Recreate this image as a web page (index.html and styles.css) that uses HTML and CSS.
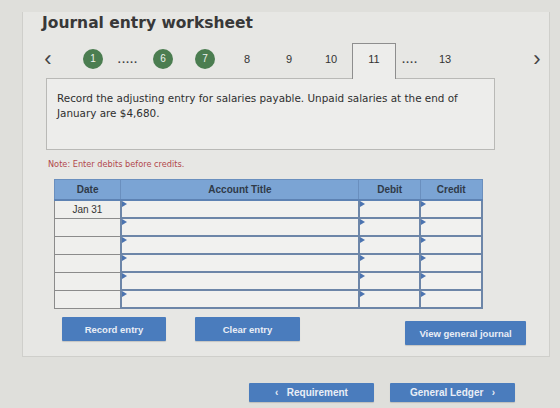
FILE: index.html
```html
<!DOCTYPE html>
<html lang="en">
<head>
    <meta charset="UTF-8">
    <title>Journal entry worksheet</title>
    <link rel="stylesheet" href="styles.css">
</head>
<body>
    <div class="panel">
        <h1 class="title">Journal entry worksheet</h1>

        <div class="steps">
            <span class="step arrow prev">&lsaquo;</span>
            <span class="step"><span class="dot">1</span></span>
            <span class="step more">.....</span>
            <span class="step"><span class="dot">6</span></span>
            <span class="step"><span class="dot">7</span></span>
            <span class="step">8</span>
            <span class="step">9</span>
            <span class="step">10</span>
            <span class="step current">11</span>
            <span class="step more">....</span>
            <span class="step">13</span>
            <span class="step arrow next">&rsaquo;</span>
        </div>

        <div class="question">
            Record the adjusting entry for salaries payable. Unpaid salaries at the end of
            January are $4,680.
        </div>

        <p class="note">Note: Enter debits before credits.</p>

        <table class="journal">
            <thead>
                <tr>
                    <th class="col-date">Date</th>
                    <th class="col-account">Account Title</th>
                    <th class="col-money">Debit</th>
                    <th class="col-money">Credit</th>
                </tr>
            </thead>
            <tbody>
                <tr><td class="date">Jan 31</td><td class="field"></td><td class="field"></td><td class="field"></td></tr>
                <tr><td class="date"></td><td class="field"></td><td class="field"></td><td class="field"></td></tr>
                <tr><td class="date"></td><td class="field"></td><td class="field"></td><td class="field"></td></tr>
                <tr><td class="date"></td><td class="field"></td><td class="field"></td><td class="field"></td></tr>
                <tr><td class="date"></td><td class="field"></td><td class="field"></td><td class="field"></td></tr>
                <tr><td class="date"></td><td class="field"></td><td class="field"></td><td class="field"></td></tr>
            </tbody>
        </table>

        <div class="actions">
            <button class="btn record">Record entry</button>
            <button class="btn clear">Clear entry</button>
            <button class="btn view">View general journal</button>
        </div>
    </div>

    <div class="pager">
        <button class="btn nav">&lsaquo;&nbsp;&nbsp;&nbsp;Requirement</button>
        <button class="btn nav">General Ledger&nbsp;&nbsp;&nbsp;&rsaquo;</button>
    </div>
</body>
</html>
```

FILE: styles.css
```css
body {
    margin: 0;
    height: 408px;
    overflow: hidden;
    background-color: #dfdfdb;
    font-family: "DejaVu Sans", Verdana, sans-serif;
    color: #333;
}
.panel {
    margin: 12px 10px 0 22px;
    height: 345px;
    box-sizing: border-box;
    background-color: #e7e7e4;
    border: 1px solid #cfcfcb;
    border-top: none;
}
.title {
    margin: 0;
    padding: 1px 0 0 19px;
    font-family: "DejaVu Sans", sans-serif;
    font-size: 15.5px;
    font-weight: 700;
    line-height: 20px;
    color: #383838;
}

/* step tabs */
.steps {
    display: flex;
    align-items: center;
    height: 35px;
    margin-top: 10px;
    padding-left: 4px;
    font-family: "Liberation Sans", Arial, sans-serif;
    font-size: 11px;
    color: #333;
    position: relative;
    z-index: 1;
}
.step {
    width: 42px;
    text-align: center;
    padding-bottom: 4px;
}
.step.more {
    width: 28px;
    font-weight: 700;
    letter-spacing: 1px;
    color: #444;
}
.step.arrow {
    font-size: 22px;
    line-height: 20px;
    color: #444;
}
.step.prev {
    margin-right: 3px;
}
.step.next {
    width: 24px;
    margin-left: auto;
}
.dot {
    display: inline-block;
    width: 20px;
    height: 20px;
    line-height: 20px;
    border-radius: 50%;
    background-color: #4b7d50;
    color: #eef3ee;
    font-size: 10px;
}
.step.current {
    width: 42px;
    align-self: stretch;
    margin-bottom: -1px;
    padding-bottom: 0;
    line-height: 30px;
    border: 1px solid #8e8e8e;
    border-bottom: none;
    background-color: #ededeb;
}

.question {
    margin-left: 23px;
    width: 449px;
    height: 72px;
    box-sizing: border-box;
    padding: 12px 20px 0 10px;
    border: 1px solid #b9b9b6;
    background-color: #ededeb;
    font-size: 10.4px;
    line-height: 15px;
    color: #2f2f2f;
}
.note {
    margin: 8px 0 0 25px;
    font-size: 8.2px;
    line-height: 12px;
    color: #b2474c;
}

/* journal table */
.journal {
    margin: 9px 0 0 31px;
    width: 429px;
    border-collapse: collapse;
    font-family: "Liberation Sans", Arial, sans-serif;
    font-size: 10px;
}
.journal th {
    height: 19px;
    padding: 0;
    background-color: #7ba4d4;
    border: 1px solid #6a8fbe;
    border-bottom: 2px solid #5d82b3;
    color: #2f3a48;
    font-weight: 700;
}
.col-date { width: 66px; }
.col-account { width: 240px; }
.col-money { width: 61px; }
.journal td {
    height: 16px;
    padding: 0;
    border: 1px solid #8b8b8b;
    background-color: #efefed;
}
.journal td.date {
    text-align: center;
    color: #333;
}
.journal td.field {
    position: relative;
    border: 2px solid #6d86a8;
    background-color: #f1f1ef;
}
/* small marker in the corner of each input cell */
.journal td.field::before {
    content: "";
    position: absolute;
    left: 0;
    top: 0;
    border-top: 3px solid transparent;
    border-bottom: 3px solid transparent;
    border-left: 5px solid #4c74b0;
}

.actions {
    display: flex;
    align-items: flex-start;
    margin: 8px 0 0 39px;
}
.btn {
    height: 24px;
    border: none;
    border-radius: 1px;
    background-color: #4a7cbd;
    color: #e9eef6;
    font-family: "Liberation Sans", Arial, sans-serif;
    font-size: 9.5px;
    font-weight: 700;
    box-shadow: 0 1px 1px rgba(0, 0, 0, 0.15);
}
.btn.record { width: 104px; }
.btn.clear { width: 105px; margin-left: 29px; }
.btn.view { width: 121px; margin-left: auto; margin-right: 23px; margin-top: 4px; }

.pager {
    display: flex;
    gap: 16px;
    margin: 26px 0 0 249px;
}
.btn.nav {
    width: 125px;
    height: 19px;
    font-size: 10px;
}
```
